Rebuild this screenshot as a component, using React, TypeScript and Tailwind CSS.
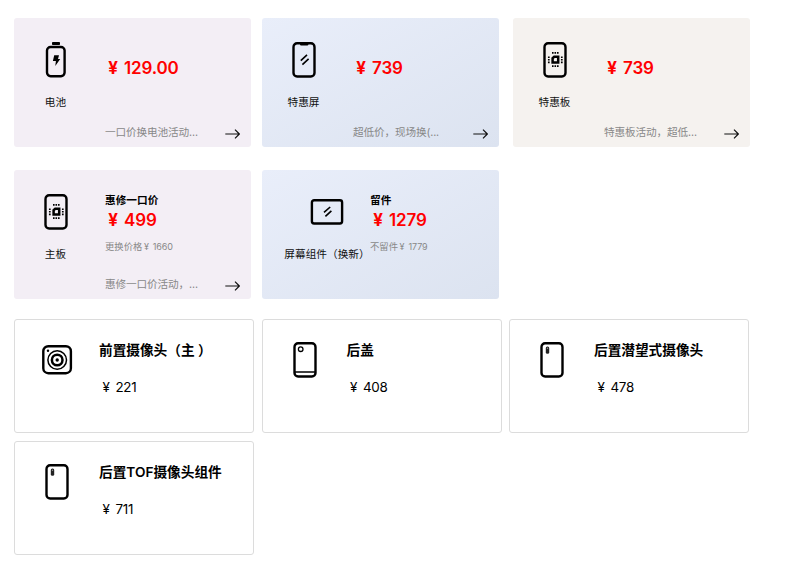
import type { ReactNode } from 'react';
import clsx from 'clsx';

type IconName = 'battery' | 'screen' | 'board' | 'tablet' | 'camera' | 'cover' | 'rear';

type Offer = {
  id: number;
  icon: IconName;
  label: string;
  title?: string;
  price: string;
  oldLabel?: string;
  oldPrice?: string;
  note?: string;
  tone: 'pink' | 'blue' | 'sand';
  wide?: boolean;
};

const OFFERS: Offer[] = [
  { id: 1, icon: 'battery', label: '电池', price: '129.00', note: '一口价换电池活动...', tone: 'pink' },
  { id: 2, icon: 'screen', label: '特惠屏', price: '739', note: '超低价，现场换(...', tone: 'blue' },
  { id: 3, icon: 'board', label: '特惠板', price: '739', note: '特惠板活动，超低...', tone: 'sand' },
  { id: 4, icon: 'board', label: '主板', title: '惠修一口价', price: '499', oldLabel: '更换价格', oldPrice: '1660', note: '惠修一口价活动，...', tone: 'pink' },
  { id: 5, icon: 'tablet', label: '屏幕组件（换新）', title: '留件', price: '1279', oldLabel: '不留件', oldPrice: '1779', tone: 'blue', wide: true },
];

const PARTS: { name: string; icon: IconName; price: string }[] = [
  { name: '前置摄像头（主）', icon: 'camera', price: '221' },
  { name: '后盖', icon: 'cover', price: '408' },
  { name: '后置潜望式摄像头', icon: 'rear', price: '478' },
  { name: '后置TOF摄像头组件', icon: 'rear', price: '711' },
];

const TONES = {
  pink: 'bg-[#f3eef5]',
  blue: 'bg-linear-to-br from-[#e9eefa] to-[#dce3f0]',
  sand: 'bg-[#f5f2ef]',
};

const body = <rect x="7.5" y="1.3" width="21" height="33.2" rx="3.6" />;

const DRAWINGS: Record<IconName, ReactNode> = {
  battery: (
    <>
      <rect x="9" y="5" width="17.6" height="29.2" rx="3.6" />
      <rect x="14" y="0.1" width="8" height="3" rx="0.8" fill="#000" stroke="none" />
      <path d="M16.2 13.3h4.8l-1 3.7h2.2l-4.9 7 0.6-5h-3z" fill="#000" stroke="none" />
    </>
  ),
  screen: (
    <>
      {body}
      <path d="M14 1h8.4v1.2a1.2 1.2 0 0 1-1.2 1.3h-6a1.2 1.2 0 0 1-1.2-1.3z" fill="#000" stroke="none" />
      <path d="M14.8 18.6l6.2-5.8M16.4 22.6l6.2-5.8" strokeWidth="1.6" />
    </>
  ),
  board: (
    <>
      {body}
      <path d="M15.6 16.2l1.6-1.4h4v5.8h-5.6z" strokeWidth="2.5" />
      <path d="M15 10.9h6.6M15 24.2h6.6" strokeWidth="1.7" strokeDasharray="1.6 0.9" />
      <path d="M11.8 14.4v6.8M24.8 14.4v6.8" strokeWidth="1.7" strokeDasharray="1.6 1" />
    </>
  ),
  tablet: (
    <>
      <rect x="2.9" y="6.3" width="30.2" height="23.2" rx="2.2" />
      <path d="M15 18.4l6.2-5.4M16.4 22.4l6-5.6" strokeWidth="1.6" />
    </>
  ),
  camera: (
    <>
      <rect x="4.3" y="4.2" width="27.6" height="27" rx="5" strokeWidth="2.4" />
      <circle cx="18.2" cy="18" r="9.3" strokeWidth="1.5" />
      <circle cx="18.2" cy="18" r="5.3" strokeWidth="2.5" />
      <circle cx="18.2" cy="18" r="1.7" fill="#000" stroke="none" />
      <circle cx="9" cy="8.8" r="1.2" fill="#000" stroke="none" />
    </>
  ),
  cover: (
    <>
      {body}
      <circle cx="13.7" cy="7.2" r="2.3" strokeWidth="1.3" />
      <path d="M7.5 30h21" strokeWidth="1.5" />
    </>
  ),
  rear: (
    <>
      {body}
      <rect x="11.8" y="4.6" width="3.4" height="7.2" rx="1.5" fill="#222" stroke="none" />
      <circle cx="13.5" cy="6.3" r="0.7" fill="#999" stroke="none" />
    </>
  ),
};

function Icon({ name }: { name: IconName }) {
  return (
    <svg className="size-9 shrink-0" viewBox="0 0 36 36" fill="none" stroke="#000" strokeWidth="2.4">
      {DRAWINGS[name]}
    </svg>
  );
}

function Arrow() {
  return (
    <svg className="h-3 w-[15px] shrink-0" viewBox="0 0 15 12" fill="none" stroke="#111" strokeWidth="1.2">
      <path d="M0.3 6h14M10 1.7L14.3 6 10 10.3" />
    </svg>
  );
}

// the closing full-width bracket sits in the middle of its cell
function PartName({ text }: { text: string }) {
  if (!text.endsWith('）')) return <>{text}</>;
  return (
    <>
      {text.slice(0, -1)}
      <span className="pl-[0.25em]">）</span>
    </>
  );
}

function OfferCard({ offer }: { offer: Offer }) {
  return (
    <div className={clsx('flex h-[129px] w-[237px] rounded-[3px]', TONES[offer.tone])}>
      <div className={clsx('flex shrink-0 flex-col items-center pt-6', offer.wide ? 'w-[108px] pl-[22px]' : 'w-[91px] pr-2')}>
        <Icon name={offer.icon} />
        <div className="mt-[17px] h-4 text-[10.67px] leading-4 whitespace-nowrap text-[#111]">{offer.label}</div>
      </div>
      <div className="flex flex-1 flex-col pt-[23px]">
        <div className="h-4 text-[10.67px] leading-4 font-bold">{offer.title}</div>
        <div className="h-6 text-[17px] leading-[23px] font-semibold tracking-[-0.2px] whitespace-nowrap text-[#ff0000]">
          <span className="-mr-px inline-block w-[16px] text-center font-bold">¥</span> {offer.price}
        </div>
        <div className="mt-[6px] h-4 text-[9px] leading-4 tracking-[-0.1px] whitespace-nowrap text-[#888]">
          {offer.oldPrice && (
            <>
              <span className="text-[9.33px] tracking-normal">{offer.oldLabel}</span>
              <span className="inline-block w-[8px] text-center">¥</span> {offer.oldPrice}
            </>
          )}
        </div>
        {offer.note && (
          <div className="mt-[22px] flex items-center justify-between pr-[11px] text-[10.67px] leading-4 text-[#888]">
            <span className="tracking-[-0.15px] whitespace-nowrap">{offer.note}</span>
            <span className="pt-px">
              <Arrow />
            </span>
          </div>
        )}
      </div>
    </div>
  );
}

export default function App() {
  return (
    <div className="h-[576px] w-[800px] bg-white pt-[18px] pl-[14px] font-['Inter','Noto_Sans_CJK_SC',sans-serif] text-black">
      <div className="grid grid-cols-[248px_251px_237px] gap-y-[23px]">
        {OFFERS.map((offer) => (
          <OfferCard key={offer.id} offer={offer} />
        ))}
      </div>
      <div className="mt-5 grid grid-cols-[240px_240px_240px] gap-x-[7.5px] gap-y-2">
        {PARTS.map((part) => (
          <div key={part.name} className="flex h-[114px] rounded-[3px] border border-[#dcdcdc] pt-[22px]">
            <div className="flex w-[84px] shrink-0 pl-6">
              <Icon name={part.icon} />
            </div>
            <div>
              <h3 className="h-[18px] text-[13.67px] leading-[17px] font-semibold whitespace-nowrap">
                <PartName text={part.name} />
              </h3>
              <p className="mt-[18px] text-[13.4px] leading-[18px] tracking-[-0.3px]">
                <span className="-mr-px inline-block w-[14px] text-center">¥</span> {part.price}
              </p>
            </div>
          </div>
        ))}
      </div>
    </div>
  );
}
